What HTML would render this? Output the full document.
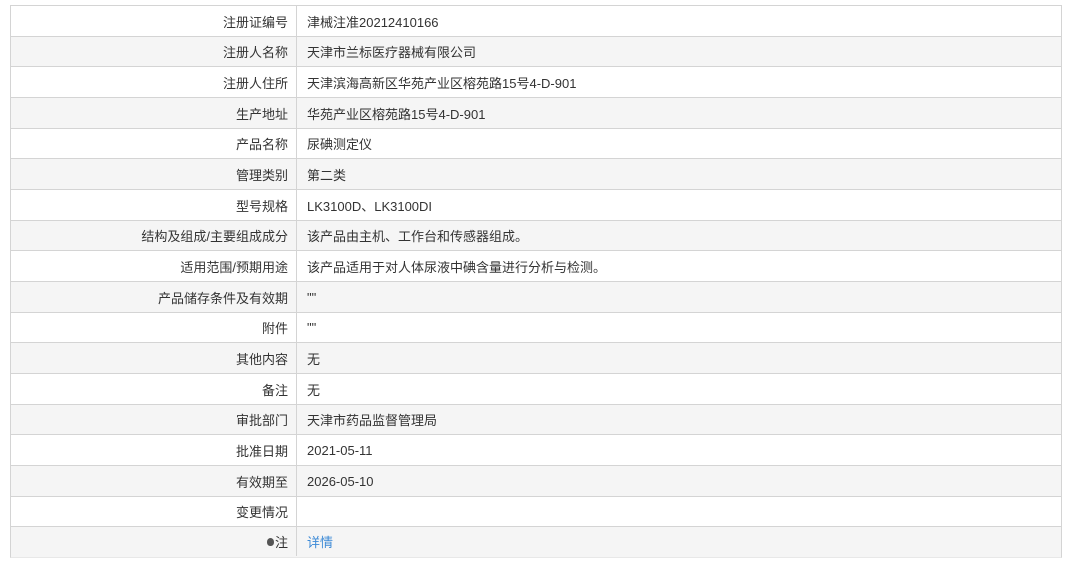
<!DOCTYPE html>
<html><head><meta charset="utf-8"><style>
body{margin:0;width:1067px;height:566px;background:#fff;font-family:"Liberation Sans","Noto Sans CJK SC",sans-serif;font-size:13px;color:#333;position:relative;overflow:hidden}
.r{position:absolute;left:10px;width:1052px;border:1px solid #d4d4d4;border-bottom:none;box-sizing:border-box}
.r.g{background:#f5f5f5}
.r.last{border-bottom:1px solid #e8e8e8}
.l{position:absolute;left:0;width:286px;top:0;bottom:1px;border-right:1px solid #d4d4d4;text-align:right;padding-right:8px;box-sizing:border-box;display:flex;align-items:center;justify-content:flex-end}
.v{position:absolute;left:296px;top:0;bottom:1px;display:flex;align-items:center}
a{color:#3d8ad6;text-decoration:none}
.dot{display:inline-block;width:7px;height:8px;border-radius:50% 50% 45% 45%;background:#555;margin-right:1px;vertical-align:middle}
</style></head><body>
<div id="t"></div>
<script>
var d=[["注册证编号","津械注准20212410166"],["注册人名称","天津市兰标医疗器械有限公司"],["注册人住所","天津滨海高新区华苑产业区榕苑路15号4-D-901"],["生产地址","华苑产业区榕苑路15号4-D-901"],["产品名称","尿碘测定仪"],["管理类别","第二类"],["型号规格","LK3100D、LK3100DI"],["结构及组成/主要组成成分","该产品由主机、工作台和传感器组成。"],["适用范围/预期用途","该产品适用于对人体尿液中碘含量进行分析与检测。"],["产品储存条件及有效期","\"\""],["附件","\"\""],["其他内容","无"],["备注","无"],["审批部门","天津市药品监督管理局"],["批准日期","2021-05-11"],["有效期至","2026-05-10"],["变更情况",""],["<span class='dot'></span>注","<a>详情</a>"]];
var h="";
for(var i=0;i<d.length;i++){var t=Math.round(5+i*30.67),b=Math.round(5+(i+1)*30.67);
h+='<div class="r'+(i%2?' g':'')+(i==d.length-1?' last':'')+'" style="top:'+t+'px;height:'+(b-t+1)+'px"><div class="l">'+d[i][0]+'</div><div class="v">'+d[i][1]+'</div></div>';}
document.getElementById("t").outerHTML=h;
</script>
</body></html>
